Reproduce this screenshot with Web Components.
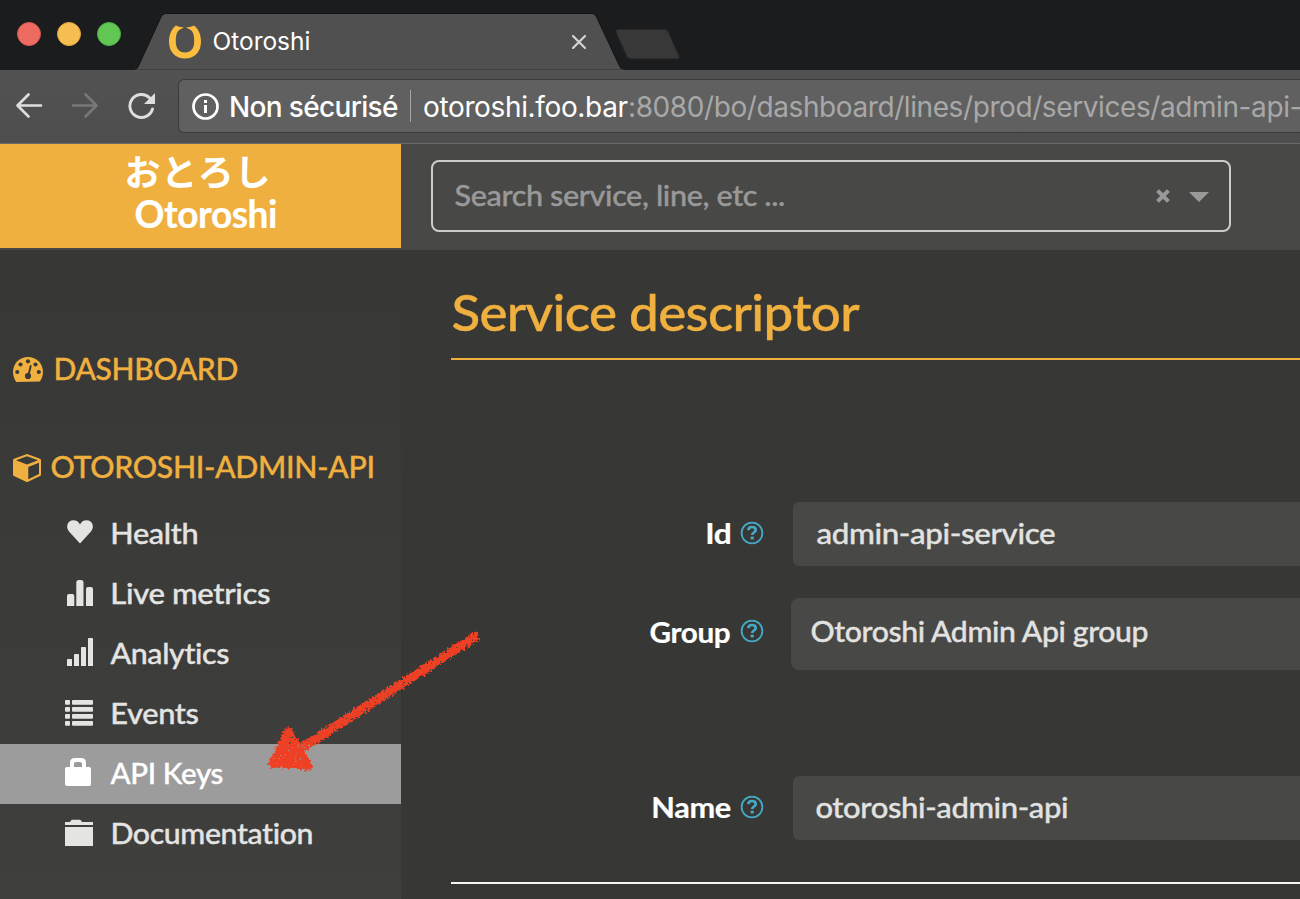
<!DOCTYPE html>
<html lang="fr">
<head>
<meta charset="utf-8">
<title>Otoroshi</title>
<style>
html,body{margin:0;height:100%;overflow:hidden;background:#373735}
body{font-family:Lato,"Noto Sans CJK JP",sans-serif}
</style>
</head>
<body>
<otoroshi-screen></otoroshi-screen>
<script>
const define = (name, html, ready) => customElements.define(name, class extends HTMLElement {
  connectedCallback() {
    if (this.shadowRoot) return;
    const t = document.createElement('template');
    t.innerHTML = html;
    this.attachShadow({mode: 'open'}).append(t.content.cloneNode(true));
    if (ready) ready(this, this.shadowRoot);
  }
});

/* One line of text whose ink spans the width in "w": tracked, or with "wide" drawn with wider letters. */
const ctx = document.createElement('canvas').getContext('2d');
define('fit-text', `<style>
:host{display:block;white-space:pre;flex:none}
span{display:block;width:max-content;transform-origin:0 50%}
:host([wide]) span{-webkit-text-stroke:var(--ink,.35px) currentColor}
</style><span><slot></slot></span>`, (el, r) => {
  const cs = getComputedStyle(el), s = el.textContent, w = +el.getAttribute('w'), span = r.querySelector('span');
  ctx.font = `${cs.fontWeight} ${cs.fontSize} ${cs.fontFamily}`;
  const wide = el.hasAttribute('wide');
  const track = wide ? -parseFloat(cs.fontSize) * .012 : 0;
  const m = ctx.measureText(s);
  const ink = m.actualBoundingBoxLeft + m.actualBoundingBoxRight + track * (s.length - 1);
  if (wide) {
    const k = w / ink;
    span.style.letterSpacing = track + 'px';
    span.style.transform = `translate(${m.actualBoundingBoxLeft * k + .5}px,-1px) scaleX(${k})`;
  } else {
    span.style.letterSpacing = (w - ink) / (s.length - 1) + 'px';
    span.style.marginLeft = m.actualBoundingBoxLeft + 'px';
  }
  el.style.width = w + 'px';
});

const icons = {
  heart: '<path d="M16 39.5 5 27.500C1.500 23 3 16.300 9.500 16.200c3 0 5.200 1.500 6.500 4.300 1.300-2.800 3.500-4.300 6.500-4.300C29 16.300 30.500 23 27 27.500z"/>',
  stats: '<path d="M3 42V32q0-2 2-2h3.300q2 0 2 2v10zM12.300 42V18.500q0-2.500 2.500-2.500h2.200q2.500 0 2.500 2.500V42zM22 42V25q0-2 2-2h3q2 0 2 2v17z"/>',
  signal: '<path d="M3 42v-6.200q0-.8.8-.8h3.400q.8 0 .8.800V42zM10 42V30.800q0-.8.8-.8h3.400q.8 0 .8.800V42zM17 42V23.800q0-.8.800-.8h3.400q.8 0 .8.800V42zM24 42V14.800q0-.8.800-.8h3.400q.8 0 .8.800V42z"/>',
  list: [16,23,30,37].map(y => `<rect x="1" y="${y}" width="5" height="4.800" rx="1"/><rect x="8" y="${y}" width="21" height="4.800" rx="1"/>`).join(''),
  lock: '<path fill-rule="evenodd" d="M6 23v-4c0-3.300 1.700-5 5-5h6c3.300 0 5 1.700 5 5v4h3q2 0 2 2v15q0 2-2 2H3q-2 0-2-2V25q0-2 2-2zM10 23h8v-3.200q0-1.800-1.800-1.800h-4.400Q10 18 10 19.800z"/>',
  folder: '<path d="M1 21v-3h5l1-1.500q.4-.7 1.500-.7h7q1 0 1.500.7l1 1.500h11v3zM1 23h28v19H1z"/>'
};

define('side-item', `<style>
:host{display:flex;height:60px;padding-left:64px;align-items:center;color:#e4e4e3;font-size:28.500px;font-weight:500;box-sizing:border-box}
:host([active]){background:#9c9c9c;color:#fff}
svg{width:32px;height:60px;margin-right:14px;fill:currentColor;flex:none}
</style><svg viewBox="0 0 32 60"></svg><slot></slot>`, (el, r) => { r.querySelector('svg').innerHTML = icons[el.getAttribute('icon')]; });

define('side-bar', `<style>
:host{display:block;width:401px;flex:none;background:linear-gradient(#373735,#3f3f3e)}
.h{display:flex;align-items:center;height:40px;padding-left:13px;color:#f0b03f;font-size:30px;font-weight:500}
.d{padding-top:99px}.o{padding-top:58px;margin-bottom:17px}
.i{margin-left:1.600px}
svg{flex:none;fill:#f0b03f}
</style>
<div class="h d"><svg width="30" height="26" viewBox="0 0 30 26" style="margin-right:11px"><path fill-rule="evenodd" d="M3.200 26C1.100 22.800 0 19.500 0 16 0 7.500 6.700 1 15 1s15 6.500 15 15c0 3.500-1.100 6.800-3.200 9.500z"/><g fill="#393938"><circle cx="4.300" cy="16" r="2.100"/><circle cx="7.500" cy="8.500" r="2.100"/><circle cx="15" cy="5.300" r="2.100"/><circle cx="22.500" cy="8.500" r="2.100"/><circle cx="25.800" cy="16" r="2.100"/><circle cx="15" cy="20" r="3.100"/></g><path d="m15.500 19 2.200-9" stroke="#393938" stroke-width="1.900" stroke-linecap="round"/></svg><fit-text wide w="182" style="margin-left:.5px">DASHBOARD</fit-text></div>
<div class="h o"><svg width="28" height="28" viewBox="0 0 28 28" style="margin-right:10px;position:relative;top:1px"><path fill-rule="evenodd" d="M13.300.2q.7-.3 1.400 0L27 4.800q1 .4 1 1.500v14.200q0 1-.9 1.500L15 27.800q-1 .5-2 0L.9 22Q0 21.500 0 20.500V6.300Q0 5.200 1 4.800zM14 2.300 3 6.300l11 4.200 11-4.200zM15.300 13v12.200L26 20V8.800z"/></svg><fit-text wide w="321">OTOROSHI-ADMIN-API</fit-text></div>
<side-item icon="heart"><fit-text wide class="i" w="85">Health</fit-text></side-item>
<side-item icon="stats"><fit-text wide class="i" w="157.500">Live metrics</fit-text></side-item>
<side-item icon="signal"><fit-text wide w="119">Analytics</fit-text></side-item>
<side-item icon="list"><fit-text wide class="i" w="86">Events</fit-text></side-item>
<side-item icon="lock" active><fit-text wide w="112.500">API Keys</fit-text></side-item>
<side-item icon="folder"><fit-text wide class="i" w="200.500">Documentation</fit-text></side-item>`);

define('form-field', `<style>
:host{display:flex;align-items:center;font-size:28.500px}
.l{width:279px;display:flex;justify-content:flex-end;color:#fff;font-weight:700;flex:none;--ink:.2px}
svg{margin:0 27px 0 10px;flex:none;position:relative;top:-1px;left:-.3px}
.f{flex:1;height:64px;border-radius:6px 0 0 6px;background:#484846;color:#e2e2e1;font-weight:500;display:flex;align-items:center;padding-left:23px;margin-left:2px;box-sizing:border-box}
:host([select]) .f{height:72px;border-radius:8px 0 0 8px;margin-left:0;padding:0 0 4px 20px}
:host([select]) .l{padding-bottom:3px}
:host([select]) svg{top:-3px}
</style><div class="l"><slot name="label"></slot></div>
<svg width="24" height="24" viewBox="0 0 24 24" fill="none" stroke="#46aac7"><circle cx="12" cy="12" r="10.400" stroke-width="1.800"/><path d="M8.300 9.200C8.500 6.900 10 6 12 6c2.200 0 3.700 1.100 3.700 2.900 0 2.700-3.500 2.500-3.500 5.100" stroke-width="2.700"/><path d="M10.600 15.600h3.200v2.800h-3.200z" fill="#46aac7" stroke="none"/></svg>
<div class="f"><slot></slot></div>`);

define('service-page', `<style>
:host{display:flex;flex-direction:column;flex:1;min-width:0;padding-left:50px;background:#373735}
h1{margin:0;padding:35px 0 0 1px;height:108px;box-sizing:border-box;color:#f0b03f;font-size:49.500px;font-weight:500;line-height:56px;flex:none;--ink:.4px}
.r{height:2px;background:#f0b03f;flex:none}
.e{height:2px;background:#f4f4f4;flex:none;margin-top:42px}
</style>
<h1><fit-text wide w="407">Service descriptor</fit-text></h1><div class="r"></div>
<form-field style="margin-top:142px"><fit-text wide slot="label" w="23">Id</fit-text><fit-text wide w="239">admin-api-service</fit-text></form-field>
<form-field select style="margin-top:32px"><fit-text wide slot="label" w="80">Group</fit-text><fit-text wide w="338">Otoroshi Admin Api group</fit-text></form-field>
<form-field style="margin-top:106px"><fit-text wide slot="label" w="77.500">Name</fit-text><fit-text wide w="251">otoroshi-admin-api</fit-text></form-field>
<div class="e"></div>`);

define('top-header', `<style>
:host{display:flex;height:106px;background:#484846;flex:none}
.b{width:401px;height:104px;background:#f0b03f;color:#fff;flex:none}
.j{font:700 36px/40px Lato,"Noto Sans CJK JP",sans-serif;height:40px;padding:8px 0 0 126.500px}
.o{font-size:37.500px;font-weight:700;line-height:40px;padding:3px 0 0 135px;--ink:.2px}
.s{margin:16px 0 0 30px;width:800px;height:72px;box-sizing:border-box;border:2px solid #ccc;border-radius:8px;display:flex;align-items:center;padding:0 20px 0 21px;color:#999;font-size:28.500px;font-weight:500}
.s fit-text{margin-right:auto}
svg{flex:none}
</style>
<div class="b"><div class="j"><fit-text w="141">おとろし</fit-text></div><div class="o"><fit-text wide w="140.500">Otoroshi</fit-text></div></div>
<div class="s"><fit-text wide w="330">Search service, line, etc ...</fit-text>
<svg width="14" height="14" viewBox="0 0 14 14" style="margin-right:19.500px" stroke="#999" stroke-width="4"><path d="m1.600 1.600 10.800 10.800M12.400 1.600 1.600 12.400"/></svg><svg width="20" height="10" viewBox="0 0 20 10" fill="#999" style="margin-top:2px"><path d="M0 0h20L10 10z"/></svg></div>`);

define('tab-strip', `<style>
:host{display:flex;height:70px;background:#1b1c1e;flex:none}
.w{display:flex;gap:16px;padding:22px 0 0 17px;width:120px;flex:none}
i{width:24px;height:24px;border-radius:50%;box-sizing:border-box}
.t{display:grid;width:485px;height:70px;flex:none}
.t>*{grid-area:1/1}
.b{overflow:visible}
.c{display:flex;align-items:center;padding:14px 36px 0 32px;height:56px;color:#fff;font:400 24.500px Inter,sans-serif}
.c fit-text{margin:-2px auto 0 12.500px}
.n{margin-left:-8px;flex:none}
</style>
<div class="w"><i style="background:#ed6b60;border:1px solid #d9574d"></i><i style="background:#f6be50;border:1px solid #dfa63e"></i><i style="background:#62c655;border:1px solid #4eae43"></i></div>
<div class="t"><svg class="b" width="485" height="70" viewBox="0 0 485 70"><path d="M-2 70q2-1 3-3L24 17q1.500-3.500 5-3.500H455q3 0 4.500 3.500L483 67q1 2 4 3z" fill="#505050" stroke="#121314"/><path d="M-2 69.500h489V70H-2z" fill="#505050"/></svg>
<div class="c"><svg width="32" height="34" viewBox="0 0 32 34"><path d="M7 .5C3 3.500 0 9 0 16.500 0 26.500 6 33.500 16 33.500s16-7 16-17C32 9 29 3.500 25 .5q-3 2-7.500 1.800.5 1.200 2.500 1.700c4 1.800 5.200 5.500 5.200 12 0 7.500-3 11.500-9.200 11.500S6.800 23.500 6.800 16C6.800 9.500 8 5.800 12 4q2-.5 2.500-1.700Q10 2.500 7 .5z" fill="#fbbd3e"/></svg><fit-text w="96">Otoroshi</fit-text><svg width="14" height="14" viewBox="0 0 14 14" stroke="#d4d4d4" stroke-width="2.200" stroke-linecap="round"><path d="m1 1 12 12M13 1 1 13"/></svg></div></div>
<svg class="n" width="66" height="70" viewBox="0 0 66 70"><path d="M3.500 29.500H51q2 0 3 2l11 25q.8 2-1 2.300H17q-3 0-4-2.300L2.200 32q-1-2 1.300-2.500z" fill="#383838" stroke="#2a2a2b"/></svg>`);

define('address-bar', `<style>
:host{display:flex;height:74px;background:linear-gradient(#525252,#4e4e4e);flex:none;box-sizing:border-box;border-bottom:1px solid #6a6a6a;align-items:flex-start}
.n{display:flex;padding:22px 0 0 15px;width:178px;box-sizing:border-box;flex:none;gap:28px}
.u{flex:1;margin-top:9px;height:54px;box-sizing:border-box;border:1px solid #3a3a3a;border-right:0;border-radius:6px 0 0 6px;background:#606060;display:flex;align-items:center;padding-left:13px;font:400 28px Inter,sans-serif;color:#fff;overflow:hidden}
.u>svg,.u>fit-text{flex:none}
.u>fit-text{margin-top:2px}
.v{width:1px;height:32px;background:#a5a5a5;margin:0 13px 0 12px;flex:none}
</style>
<div class="n"><svg width="28" height="28" viewBox="0 0 28 28" fill="none" stroke="#dedede" stroke-width="2.700" stroke-linecap="round" stroke-linejoin="round"><path d="M26 13.500H3M13.500 2.500l-11 11 11 11"/></svg><svg width="28" height="28" viewBox="0 0 28 28" fill="none" stroke="#787878" stroke-width="2.700" stroke-linecap="round" stroke-linejoin="round"><path d="M2 13.500h23M14.500 2.500l11 11-11 11"/></svg><svg width="30" height="28" viewBox="0 0 30 28" fill="none"><path d="M25.500 17A11.500 11.500 0 1 1 22.500 5.800" stroke="#dedede" stroke-width="2.900" stroke-linecap="round"/><path d="M28 1v11H17z" fill="#dedede"/></svg></div>
<div class="u"><svg width="27" height="27" viewBox="0 0 27 27"><circle cx="13.500" cy="13.500" r="12" fill="none" stroke="#fff" stroke-width="2.700"/><path d="M12 7h3v3h-3zM12 12h3v8h-3z" fill="#fff"/></svg><fit-text w="167" style="margin-left:12px;font-weight:500">Non sécurisé</fit-text><div class="v"></div><fit-text w="203.500">otoroshi.foo.bar</fit-text><fit-text w="670.500" style="margin-left:2.500px;color:#a8a8a8">:8080/bo/dashboard/lines/prod/services/admin-api-</fit-text></div>`);

/* Crayon arrow that points at the API Keys entry. */
define('crayon-arrow', `<style>:host{position:absolute;left:250px;top:610px;width:250px;height:180px;pointer-events:none}</style>
<svg width="250" height="180" viewBox="0 0 250 180"><filter id="c" x="0" y="0" width="250" height="180" filterUnits="userSpaceOnUse" color-interpolation-filters="sRGB"><feTurbulence type="fractalNoise" baseFrequency=".38" numOctaves="3" seed="7" result="n"/><feDisplacementMap in="SourceGraphic" in2="n" scale="7" xChannelSelector="R" yChannelSelector="G" result="d"/><feColorMatrix in="n" type="matrix" values="0 0 0 0 0 0 0 0 0 0 0 0 0 0 0 0 0 -12 0 9.500" result="m"/><feComposite in="d" in2="m" operator="in"/></filter><g filter="url(#c)" fill="#ee4024" stroke="#ee4024"><path d="M53 137 228 25" stroke-width="9"/><path d="m38 121-16 33 37 2z" stroke-width="7.500" stroke-linejoin="round"/></g></svg>`);

define('otoroshi-screen', `<style>
:host{display:flex;flex-direction:column;position:relative;width:1300px;height:899px;overflow:hidden}
main{display:flex;flex:1;min-height:0}
</style><tab-strip></tab-strip><address-bar></address-bar><top-header></top-header><main><side-bar></side-bar><service-page></service-page></main><crayon-arrow></crayon-arrow>`);
</script>
</body>
</html>
